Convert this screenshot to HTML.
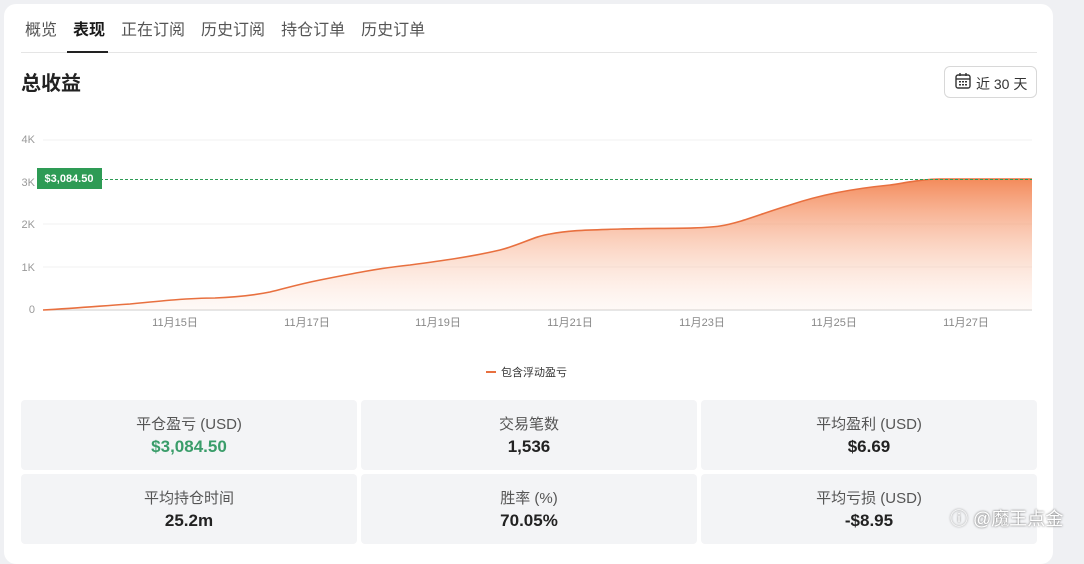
<!DOCTYPE html>
<html><head><meta charset="utf-8">
<style>
*{margin:0;padding:0;box-sizing:border-box}
body{width:1084px;height:551px;background:#eff0f3;overflow:hidden;font-family:"Liberation Sans","Noto Sans CJK SC",sans-serif;position:relative}
.card{position:absolute;left:4px;top:4px;width:1049px;height:560px;background:#fff;border-radius:12px}
.tabs{position:absolute;left:25px;top:16px;font-size:16px;color:#555;white-space:nowrap}
.tabs span{display:inline-block;margin-right:16px}
.tabs .on{color:#1a1a1a;font-weight:bold}
.tline{position:absolute;left:21px;top:52px;width:1016px;height:1px;background:#e5e5e5}
.uline{position:absolute;left:67px;top:51px;width:41px;height:2px;background:#222}
h1{position:absolute;left:21px;top:67px;font-size:20px;color:#222}
.btn{position:absolute;left:944px;top:66px;width:93px;height:32px;border:1px solid #d8d8d8;border-radius:6px;font-size:14px;color:#333;padding:7px 0 0 31px}
.stat{position:absolute;width:336px;height:70px;background:#f3f4f6;border-radius:4px;text-align:center}
.stat .l{font-size:15px;color:#555;margin-top:13px}
.stat .v{font-size:17px;font-weight:bold;color:#222;margin-top:3px}
.wm{position:absolute;left:950px;top:505px;font-size:18px;color:#fff;text-shadow:0 0 2px #555}
</style></head><body>
<div class="card"></div>
<div class="tabs"><span>概览</span><span class="on">表现</span><span>正在订阅</span><span>历史订阅</span><span>持仓订单</span><span>历史订单</span></div>
<div class="tline"></div><div class="uline"></div>
<h1>总收益</h1>
<div class="btn">近 30 天</div>
<svg style="position:absolute;left:954px;top:72px" width="18" height="18" viewBox="0 0 18 18"><rect x="2" y="3" width="14" height="13" rx="2" fill="none" stroke="#333" stroke-width="1.4"/><line x1="2" y1="7" x2="16" y2="7" stroke="#333" stroke-width="1.4"/><line x1="6" y1="1" x2="6" y2="4" stroke="#333" stroke-width="1.4"/><line x1="12" y1="1" x2="12" y2="4" stroke="#333" stroke-width="1.4"/><g fill="#333"><rect x="5" y="9" width="2" height="1.5"/><rect x="8" y="9" width="2" height="1.5"/><rect x="11" y="9" width="2" height="1.5"/><rect x="5" y="12" width="2" height="1.5"/><rect x="8" y="12" width="2" height="1.5"/><rect x="11" y="12" width="2" height="1.5"/></g></svg>
<svg style="position:absolute;left:0;top:120px" width="1084" height="270" viewBox="0 120 1084 270">
<defs><linearGradient id="g" x1="0" y1="0" x2="0" y2="1" gradientUnits="objectBoundingBox"><stop offset="0" stop-color="#f38553" stop-opacity="0.95"/><stop offset="1" stop-color="#fde3d6" stop-opacity="0.2"/></linearGradient></defs>
<g stroke="#f0f0f0"><line x1="43" y1="140" x2="1032" y2="140"/><line x1="43" y1="224" x2="1032" y2="224"/><line x1="43" y1="267" x2="1032" y2="267"/></g>
<line x1="43" y1="310" x2="1032" y2="310" stroke="#ccc"/>
<g font-size="11" fill="#999" text-anchor="end"><text x="35" y="143">4K</text><text x="35" y="186">3K</text><text x="35" y="228">2K</text><text x="35" y="271">1K</text><text x="35" y="313">0</text></g>
<g font-size="11" fill="#888" text-anchor="middle"><text x="175" y="326">11月15日</text><text x="307" y="326">11月17日</text><text x="438" y="326">11月19日</text><text x="570" y="326">11月21日</text><text x="702" y="326">11月23日</text><text x="834" y="326">11月25日</text><text x="966" y="326">11月27日</text></g>
<path d="M43,310 C80,308 100,306 130,304 C160,301 190,298 215,298 C240,297 255,295 270,292 C290,287 300,284 320,280 C350,274 380,268 410,265 C440,261 470,257 500,250 C520,245 535,236 550,234 C570,230 590,230 620,229 C660,228 700,229 720,226 C740,223 760,214 790,205 C820,195 850,189 890,185 C910,182 925,179 940,179 L1032,179 L1032,310 L43,310 Z" fill="url(#g)"/>
<path d="M43,310 C80,308 100,306 130,304 C160,301 190,298 215,298 C240,297 255,295 270,292 C290,287 300,284 320,280 C350,274 380,268 410,265 C440,261 470,257 500,250 C520,245 535,236 550,234 C570,230 590,230 620,229 C660,228 700,229 720,226 C740,223 760,214 790,205 C820,195 850,189 890,185 C910,182 925,179 940,179 L1032,179" fill="none" stroke="#e8703f" stroke-width="1.6"/>
<line x1="100" y1="179.5" x2="1032" y2="179.5" stroke="#2e9b55" stroke-dasharray="3,2"/>
<rect x="37" y="168" width="65" height="21" fill="#2e9b55"/>
<text x="69" y="182" font-size="11" font-weight="bold" fill="#fff" text-anchor="middle">$3,084.50</text>
<line x1="486" y1="372" x2="496" y2="372" stroke="#e8703f" stroke-width="2"/>
<text x="501" y="376" font-size="11" fill="#333">包含浮动盈亏</text>
</svg>
<div class="stat" style="left:21px;top:400px"><div class="l">平仓盈亏 (USD)</div><div class="v" style="color:#3a9d6a">$3,084.50</div></div>
<div class="stat" style="left:361px;top:400px"><div class="l">交易笔数</div><div class="v">1,536</div></div>
<div class="stat" style="left:701px;top:400px"><div class="l">平均盈利 (USD)</div><div class="v">$6.69</div></div>
<div class="stat" style="left:21px;top:474px"><div class="l">平均持仓时间</div><div class="v">25.2m</div></div>
<div class="stat" style="left:361px;top:474px"><div class="l">胜率 (%)</div><div class="v">70.05%</div></div>
<div class="stat" style="left:701px;top:474px"><div class="l">平均亏损 (USD)</div><div class="v">-$8.95</div></div>
<div class="wm">ⓘ @魔王点金</div>
</body></html>
